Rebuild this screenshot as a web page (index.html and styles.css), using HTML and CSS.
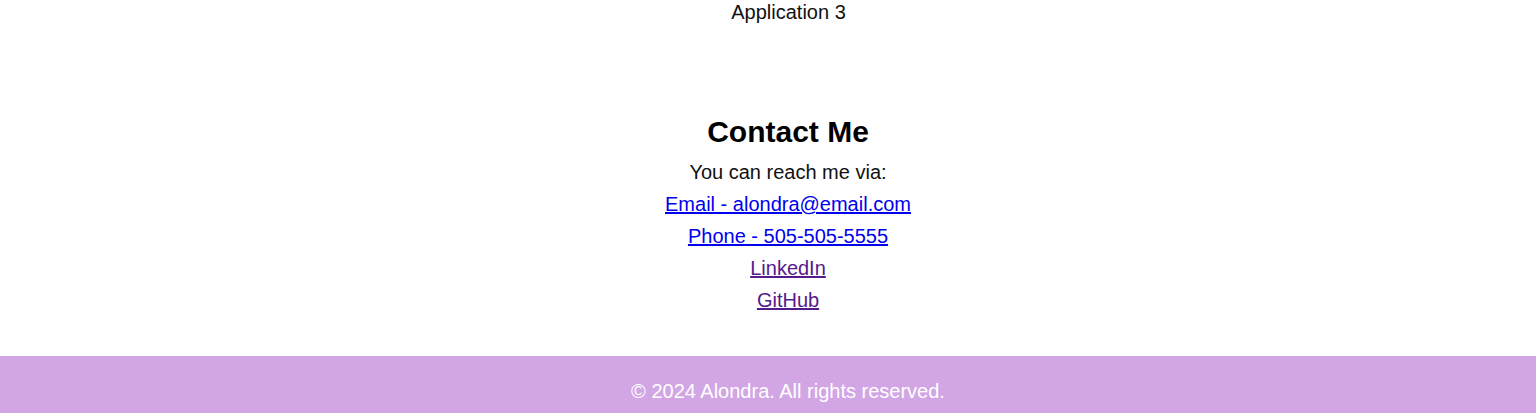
FILE: index.html
```html
<!DOCTYPE html>
<html lang="en">
<head>
<meta charset="utf-8">
<title>Alondra</title>
<link rel="stylesheet" href="styles.css">
</head>
<body>
<main class="page">
  <section class="projects">
    <p class="project-name">Application 3</p>
  </section>
  <section class="contact">
    <h2 class="contact-title">Contact Me</h2>
    <p class="contact-intro">You can reach me via:</p>
    <ul class="contact-list">
      <li><a class="link" href="#email">Email - alondra@email.com</a></li>
      <li><a class="link" href="#phone">Phone - 505-505-5555</a></li>
      <li><a class="link visited" href="#linkedin">LinkedIn</a></li>
      <li><a class="link visited" href="#github">GitHub</a></li>
    </ul>
  </section>
</main>
<footer class="footer">
  <p class="footer-text">© 2024 Alondra. All rights reserved.</p>
</footer>
</body>
</html>
```
FILE: styles.css
```css
html, body {
  margin: 0;
  padding: 0;
  background: #ffffff;
}
body {
  font-family: "Liberation Sans", Arial, sans-serif;
  font-size: 20px;
  color: #111111;
  line-height: 23px;
}
.page {
  display: flex;
  flex-direction: column;
  align-items: center;
  text-align: center;
  padding: 1px 0 0 40px;
}
.projects {
  display: flex;
  flex-direction: column;
  align-items: center;
}
.project-name {
  margin: 0;
  padding-left: 1px;
}
.contact {
  margin-top: 91px;
  display: flex;
  flex-direction: column;
  align-items: center;
}
.contact-title {
  margin: 0;
  font-size: 30px;
  line-height: 34px;
  font-weight: bold;
  color: #000000;
}
.contact-intro {
  margin: 12px 0 0;
}
.contact-list {
  list-style: none;
  margin: 9px 0 0;
  padding: 0;
  display: flex;
  flex-direction: column;
  align-items: center;
  gap: 9px;
}
.link {
  color: #0000ee;
  text-decoration: underline;
}
.link.visited {
  color: #551a8b;
}
.footer {
  margin-top: 44px;
  background: #d2a6e5;
  padding: 24px 0 24px 40px;
  text-align: center;
}
.footer-text {
  margin: 0;
  color: #ffffff;
}
```
